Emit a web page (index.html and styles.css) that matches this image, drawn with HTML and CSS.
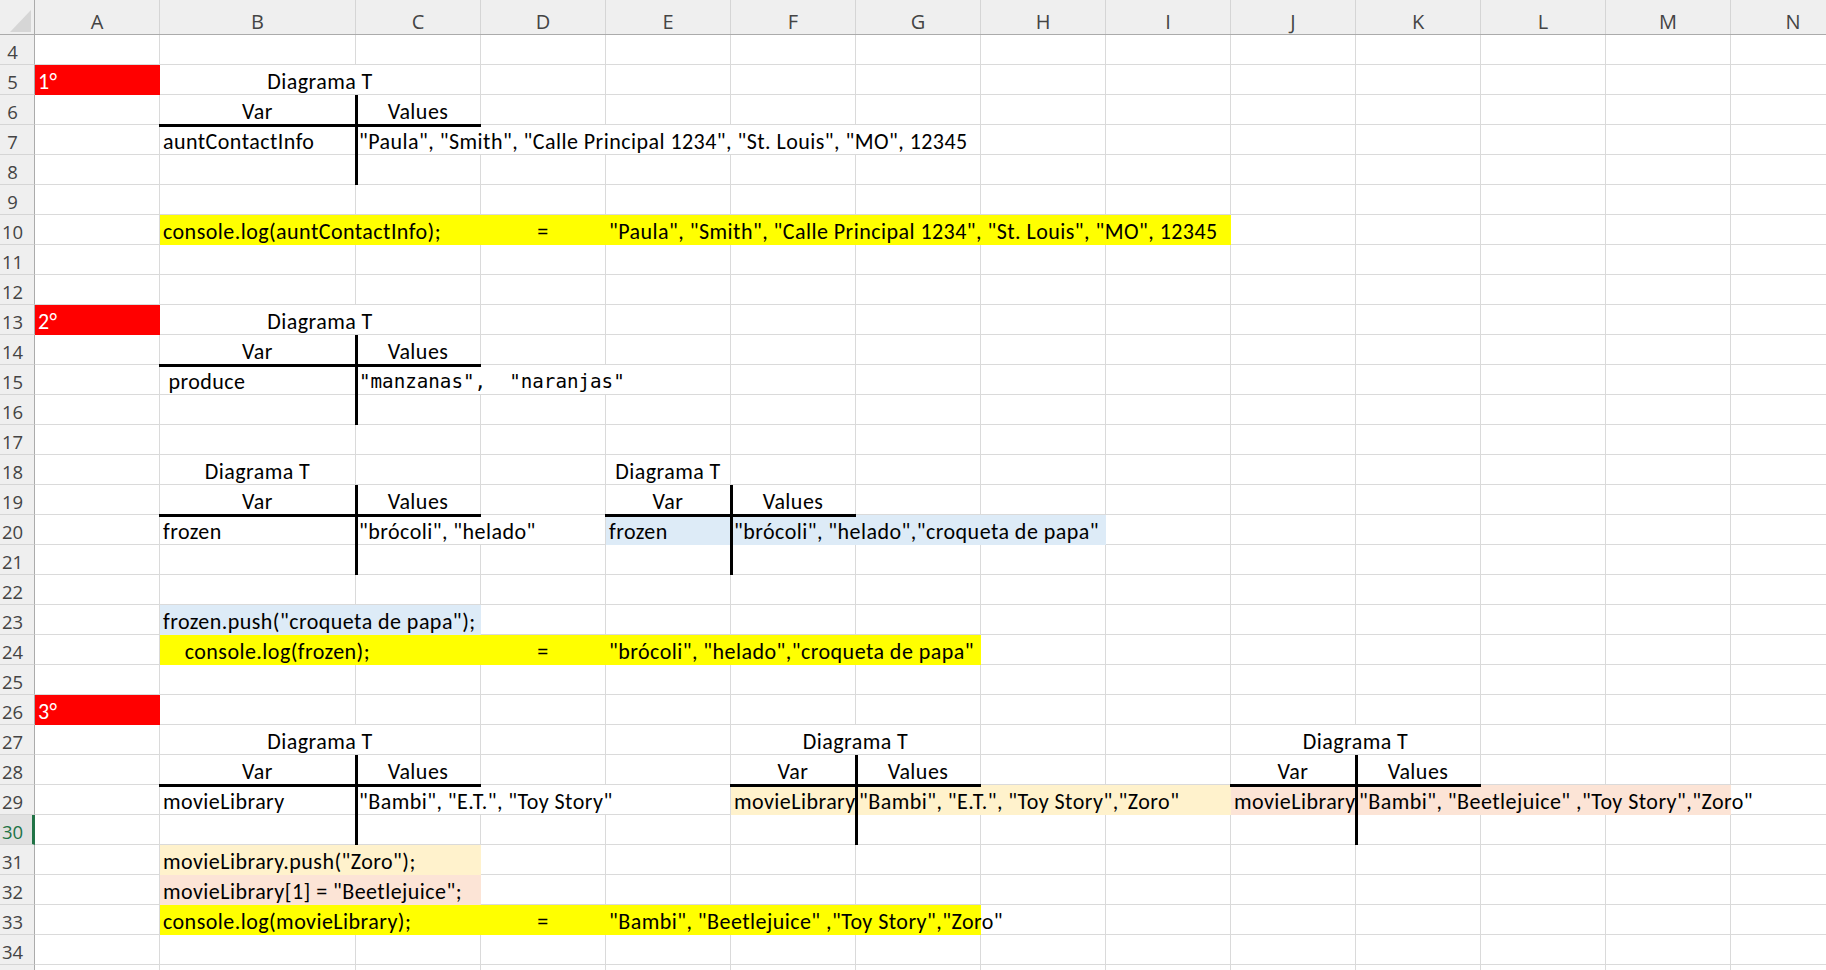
FILE: index.html
```html
<!DOCTYPE html>
<html lang="es">
<head>
<meta charset="utf-8">
<title>Diagrama T</title>
<link rel="stylesheet" href="styles.css">
</head>
<body>
<div class="sheet">
  <div class="colhdr">
    <div class="corner"><svg width="35" height="34" viewBox="0 0 35 34"><polygon points="10,32 31,10 31,32" fill="#d6d6d6"/></svg></div>
    <div class="ch">A</div><div class="ch">B</div><div class="ch">C</div><div class="ch">D</div><div class="ch">E</div><div class="ch">F</div><div class="ch">G</div><div class="ch">H</div><div class="ch">I</div><div class="ch">J</div><div class="ch">K</div><div class="ch">L</div><div class="ch">M</div><div class="ch">N</div>
  </div>

  <div class="row"><div class="rh">4</div><div class="c"></div><div class="c"></div><div class="c"></div><div class="c"></div><div class="c"></div><div class="c"></div><div class="c"></div><div class="c"></div><div class="c"></div><div class="c"></div><div class="c"></div><div class="c"></div><div class="c"></div><div class="c"></div></div>

  <div class="row"><div class="rh">5</div><div class="c red">1°</div><div class="c s2 ctr">Diagrama T</div><div class="c"></div><div class="c"></div><div class="c"></div><div class="c"></div><div class="c"></div><div class="c"></div><div class="c"></div><div class="c"></div><div class="c"></div><div class="c"></div><div class="c"></div></div>

  <div class="row"><div class="rh">6</div><div class="c"></div><div class="c ctr tb">Var</div><div class="c ctr tb tl">Values</div><div class="c"></div><div class="c"></div><div class="c"></div><div class="c"></div><div class="c"></div><div class="c"></div><div class="c"></div><div class="c"></div><div class="c"></div><div class="c"></div><div class="c"></div></div>

  <div class="row"><div class="rh">7</div><div class="c"></div><div class="c">auntContactInfo</div><div class="c s5 tl">"Paula", "Smith", "Calle Principal 1234", "St. Louis", "MO", 12345</div><div class="c"></div><div class="c"></div><div class="c"></div><div class="c"></div><div class="c"></div><div class="c"></div><div class="c"></div></div>

  <div class="row"><div class="rh">8</div><div class="c"></div><div class="c"></div><div class="c tl"></div><div class="c"></div><div class="c"></div><div class="c"></div><div class="c"></div><div class="c"></div><div class="c"></div><div class="c"></div><div class="c"></div><div class="c"></div><div class="c"></div><div class="c"></div></div>

  <div class="row"><div class="rh">9</div><div class="c"></div><div class="c"></div><div class="c"></div><div class="c"></div><div class="c"></div><div class="c"></div><div class="c"></div><div class="c"></div><div class="c"></div><div class="c"></div><div class="c"></div><div class="c"></div><div class="c"></div><div class="c"></div></div>

  <div class="row"><div class="rh">10</div><div class="c"></div><div class="c s2 yel">console.log(auntContactInfo);</div><div class="c yel ctr">=</div><div class="c s5 yel">"Paula", "Smith", "Calle Principal 1234", "St. Louis", "MO", 12345</div><div class="c"></div><div class="c"></div><div class="c"></div><div class="c"></div><div class="c"></div></div>

  <div class="row"><div class="rh">11</div><div class="c"></div><div class="c"></div><div class="c"></div><div class="c"></div><div class="c"></div><div class="c"></div><div class="c"></div><div class="c"></div><div class="c"></div><div class="c"></div><div class="c"></div><div class="c"></div><div class="c"></div><div class="c"></div></div>

  <div class="row"><div class="rh">12</div><div class="c"></div><div class="c"></div><div class="c"></div><div class="c"></div><div class="c"></div><div class="c"></div><div class="c"></div><div class="c"></div><div class="c"></div><div class="c"></div><div class="c"></div><div class="c"></div><div class="c"></div><div class="c"></div></div>

  <div class="row"><div class="rh">13</div><div class="c red">2°</div><div class="c s2 ctr">Diagrama T</div><div class="c"></div><div class="c"></div><div class="c"></div><div class="c"></div><div class="c"></div><div class="c"></div><div class="c"></div><div class="c"></div><div class="c"></div><div class="c"></div><div class="c"></div></div>

  <div class="row"><div class="rh">14</div><div class="c"></div><div class="c ctr tb">Var</div><div class="c ctr tb tl">Values</div><div class="c"></div><div class="c"></div><div class="c"></div><div class="c"></div><div class="c"></div><div class="c"></div><div class="c"></div><div class="c"></div><div class="c"></div><div class="c"></div><div class="c"></div></div>

  <div class="row"><div class="rh">15</div><div class="c"></div><div class="c"> produce</div><div class="c s3 tl mono">"manzanas",  "naranjas"</div><div class="c"></div><div class="c"></div><div class="c"></div><div class="c"></div><div class="c"></div><div class="c"></div><div class="c"></div><div class="c"></div><div class="c"></div></div>

  <div class="row"><div class="rh">16</div><div class="c"></div><div class="c"></div><div class="c tl"></div><div class="c"></div><div class="c"></div><div class="c"></div><div class="c"></div><div class="c"></div><div class="c"></div><div class="c"></div><div class="c"></div><div class="c"></div><div class="c"></div><div class="c"></div></div>

  <div class="row"><div class="rh">17</div><div class="c"></div><div class="c"></div><div class="c"></div><div class="c"></div><div class="c"></div><div class="c"></div><div class="c"></div><div class="c"></div><div class="c"></div><div class="c"></div><div class="c"></div><div class="c"></div><div class="c"></div><div class="c"></div></div>

  <div class="row"><div class="rh">18</div><div class="c"></div><div class="c ctr">Diagrama T</div><div class="c"></div><div class="c"></div><div class="c ctr">Diagrama T</div><div class="c"></div><div class="c"></div><div class="c"></div><div class="c"></div><div class="c"></div><div class="c"></div><div class="c"></div><div class="c"></div><div class="c"></div></div>

  <div class="row"><div class="rh">19</div><div class="c"></div><div class="c ctr tb">Var</div><div class="c ctr tb tl">Values</div><div class="c"></div><div class="c ctr tb">Var</div><div class="c ctr tb tl">Values</div><div class="c"></div><div class="c"></div><div class="c"></div><div class="c"></div><div class="c"></div><div class="c"></div><div class="c"></div><div class="c"></div></div>

  <div class="row"><div class="rh">20</div><div class="c"></div><div class="c">frozen</div><div class="c s2 tl">"brócoli", "helado"</div><div class="c blue">frozen</div><div class="c s3 blue tl">"brócoli", "helado","croqueta de papa"</div><div class="c"></div><div class="c"></div><div class="c"></div><div class="c"></div><div class="c"></div><div class="c"></div></div>

  <div class="row"><div class="rh">21</div><div class="c"></div><div class="c"></div><div class="c tl"></div><div class="c"></div><div class="c"></div><div class="c tl"></div><div class="c"></div><div class="c"></div><div class="c"></div><div class="c"></div><div class="c"></div><div class="c"></div><div class="c"></div><div class="c"></div></div>

  <div class="row"><div class="rh">22</div><div class="c"></div><div class="c"></div><div class="c"></div><div class="c"></div><div class="c"></div><div class="c"></div><div class="c"></div><div class="c"></div><div class="c"></div><div class="c"></div><div class="c"></div><div class="c"></div><div class="c"></div><div class="c"></div></div>

  <div class="row"><div class="rh">23</div><div class="c"></div><div class="c s2 blue">frozen.push("croqueta de papa");</div><div class="c"></div><div class="c"></div><div class="c"></div><div class="c"></div><div class="c"></div><div class="c"></div><div class="c"></div><div class="c"></div><div class="c"></div><div class="c"></div><div class="c"></div></div>

  <div class="row"><div class="rh">24</div><div class="c"></div><div class="c s2 yel">    console.log(frozen);</div><div class="c yel ctr">=</div><div class="c s3 yel">"brócoli", "helado","croqueta de papa"</div><div class="c"></div><div class="c"></div><div class="c"></div><div class="c"></div><div class="c"></div><div class="c"></div><div class="c"></div></div>

  <div class="row"><div class="rh">25</div><div class="c"></div><div class="c"></div><div class="c"></div><div class="c"></div><div class="c"></div><div class="c"></div><div class="c"></div><div class="c"></div><div class="c"></div><div class="c"></div><div class="c"></div><div class="c"></div><div class="c"></div><div class="c"></div></div>

  <div class="row"><div class="rh">26</div><div class="c red">3°</div><div class="c"></div><div class="c"></div><div class="c"></div><div class="c"></div><div class="c"></div><div class="c"></div><div class="c"></div><div class="c"></div><div class="c"></div><div class="c"></div><div class="c"></div><div class="c"></div><div class="c"></div></div>

  <div class="row"><div class="rh">27</div><div class="c"></div><div class="c s2 ctr">Diagrama T</div><div class="c"></div><div class="c"></div><div class="c s2 ctr">Diagrama T</div><div class="c"></div><div class="c"></div><div class="c s2 ctr">Diagrama T</div><div class="c"></div><div class="c"></div><div class="c"></div></div>

  <div class="row"><div class="rh">28</div><div class="c"></div><div class="c ctr tb">Var</div><div class="c ctr tb tl">Values</div><div class="c"></div><div class="c"></div><div class="c ctr tb">Var</div><div class="c ctr tb tl">Values</div><div class="c"></div><div class="c"></div><div class="c ctr tb">Var</div><div class="c ctr tb tl">Values</div><div class="c"></div><div class="c"></div><div class="c"></div></div>

  <div class="row"><div class="rh">29</div><div class="c"></div><div class="c">movieLibrary</div><div class="c s3 tl">"Bambi", "E.T.", "Toy Story"</div><div class="c cream">movieLibrary</div><div class="c s3 cream tl">"Bambi", "E.T.", "Toy Story","Zoro"</div><div class="c pink">movieLibrary</div><div class="c s3 pink tl">"Bambi", "Beetlejuice" ,"Toy Story","Zoro"</div><div class="c"></div></div>

  <div class="row"><div class="rh sel">30</div><div class="c"></div><div class="c"></div><div class="c tl"></div><div class="c"></div><div class="c"></div><div class="c"></div><div class="c tl"></div><div class="c"></div><div class="c"></div><div class="c"></div><div class="c tl"></div><div class="c"></div><div class="c"></div><div class="c"></div></div>

  <div class="row"><div class="rh">31</div><div class="c"></div><div class="c s2 cream">movieLibrary.push("Zoro");</div><div class="c"></div><div class="c"></div><div class="c"></div><div class="c"></div><div class="c"></div><div class="c"></div><div class="c"></div><div class="c"></div><div class="c"></div><div class="c"></div><div class="c"></div></div>

  <div class="row"><div class="rh">32</div><div class="c"></div><div class="c s2 pink">movieLibrary[1] = "Beetlejuice";</div><div class="c"></div><div class="c"></div><div class="c"></div><div class="c"></div><div class="c"></div><div class="c"></div><div class="c"></div><div class="c"></div><div class="c"></div><div class="c"></div><div class="c"></div></div>

  <div class="row"><div class="rh">33</div><div class="c"></div><div class="c s2 yel">console.log(movieLibrary);</div><div class="c yel ctr">=</div><div class="c s3 yel">"Bambi", "Beetlejuice" ,"Toy Story","Zoro"</div><div class="c"></div><div class="c"></div><div class="c"></div><div class="c"></div><div class="c"></div><div class="c"></div><div class="c"></div></div>

  <div class="row"><div class="rh">34</div><div class="c"></div><div class="c"></div><div class="c"></div><div class="c"></div><div class="c"></div><div class="c"></div><div class="c"></div><div class="c"></div><div class="c"></div><div class="c"></div><div class="c"></div><div class="c"></div><div class="c"></div><div class="c"></div></div>

  <div class="row"><div class="rh"></div><div class="c"></div><div class="c"></div><div class="c"></div><div class="c"></div><div class="c"></div><div class="c"></div><div class="c"></div><div class="c"></div><div class="c"></div><div class="c"></div><div class="c"></div><div class="c"></div><div class="c"></div><div class="c"></div></div>
</div>
</body>
</html>
```

FILE: styles.css
```css
html, body {
  margin: 0;
  padding: 0;
  background: #ffffff;
}
body {
  width: 1826px;
  height: 970px;
  overflow: hidden;
}
.sheet {
  width: 1900px;
  font-family: Calibri, Carlito, "Lato", sans-serif;
  font-size: 22px;
  letter-spacing: 0.45px;
  color: #000;
}
.colhdr, .row {
  display: grid;
  grid-template-columns: 35px 125px 196px repeat(12, 125px);
}
.colhdr {
  height: 35px;
  background: #efefef;
  border-bottom: 1px solid #ababab;
  box-sizing: border-box;
}
.corner {
  border-right: 1px solid #ababab;
  box-sizing: border-box;
  height: 34px;
}
.corner svg { display: block; }
.ch {
  font-family: "Open Sans", "Noto Sans", sans-serif;
  font-size: 20px;
  letter-spacing: 0;
  color: #444;
  text-align: center;
  line-height: 20px;
  padding-top: 12px;
  height: 34px;
  box-sizing: border-box;
  border-right: 1px solid #d5d5d5;
}
.row {
  height: 30px;
}
.rh {
  font-family: "Open Sans", "Noto Sans", sans-serif;
  font-size: 18.5px;
  letter-spacing: 0;
  color: #444;
  background: #efefef;
  box-sizing: border-box;
  height: 30px;
  line-height: 34px;
  text-align: center;
  padding-right: 9px;
  border-right: 1px solid #ababab;
  border-bottom: 1px solid #d5d5d5;
}
.rh.sel {
  background: #e1e1e1;
  color: #217346;
  border-right: 3px solid #217346;
  padding-right: 7px;
}
.c {
  position: relative;
  box-sizing: border-box;
  height: 30px;
  border-right: 1px solid #dadada;
  border-bottom: 1px solid #dadada;
  padding: 0 3px;
  line-height: 34px;
  white-space: pre;
  overflow: visible;
}
.s2 { grid-column: span 2; }
.s3 { grid-column: span 3; }
.s5 { grid-column: span 5; }
.ctr { text-align: center; }
.mono {
  font-family: "DejaVu Sans Mono", "Liberation Mono", monospace;
  font-size: 19.2px;
  letter-spacing: 0;
}
.red { background: #ff0000; color: #ffffff; border-color: transparent; }
.yel { background: #ffff00; border-color: transparent; }
.blue { background: #ddebf7; border-color: transparent; }
.cream { background: #fff2cc; border-color: transparent; }
.pink { background: #fce4d6; border-color: transparent; }
.tl::before {
  content: "";
  position: absolute;
  left: -1px;
  top: 0;
  bottom: -1px;
  width: 3px;
  background: #000;
  z-index: 5;
}
.tb::after {
  content: "";
  position: absolute;
  left: -1px;
  right: -1px;
  bottom: -3px;
  height: 3px;
  background: #000;
  z-index: 5;
}
```
